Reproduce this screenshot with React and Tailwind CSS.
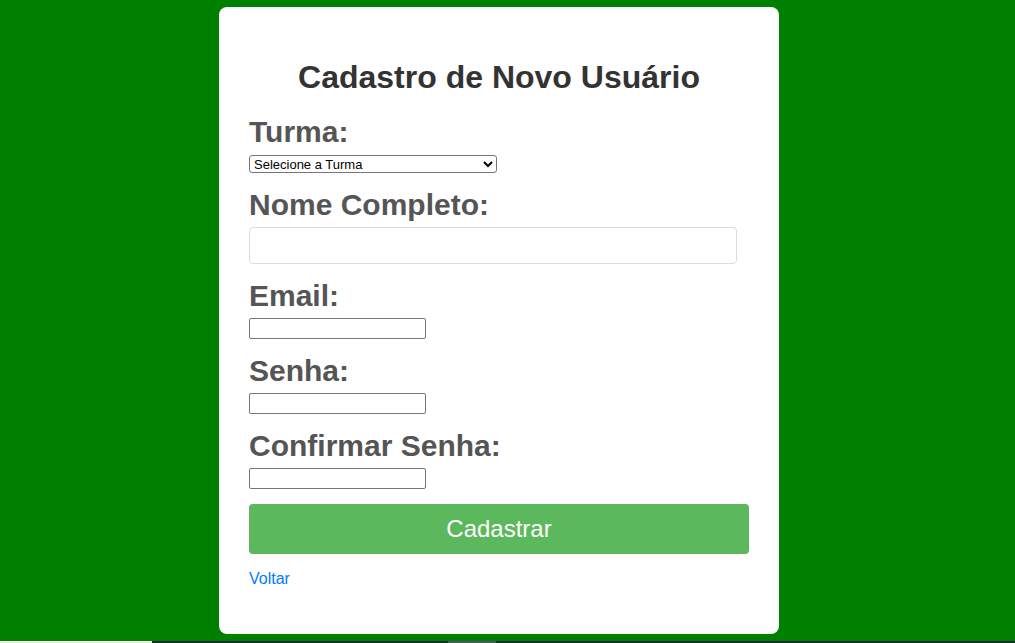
export default function App() {
  return (
    <div className="flex h-[643px] flex-col overflow-hidden bg-[#008000] font-['Liberation_Sans',Arial,sans-serif]">
      <div className="flex flex-1 justify-center pt-[7px] pr-[17px]">
        <form
          className="h-fit w-[560px] rounded-[8px] bg-white p-[30px]"
          onSubmit={(e) => e.preventDefault()}
        >
          <h1 className="mt-[21px] mb-[17px] text-center text-[32px] leading-[39px] font-bold text-[#333]">
            Cadastro de Novo Usuário
          </h1>

          {/* Turma */}
          <label className="mb-[5px] block text-[30px] leading-[36px] font-bold text-[#555]">
            Turma:
          </label>
          <select className="mb-[14px] block h-[18px] w-[248px] rounded-[3px] border border-[#767676] bg-white text-[13px] leading-[16px] text-black">
            <option>Selecione a Turma</option>
          </select>

          {/* Nome */}
          <label className="mb-[4px] block text-[30px] leading-[36px] font-bold text-[#555]">
            Nome Completo:
          </label>
          <input
            type="text"
            className="mb-[14px] block h-[37px] w-[488px] rounded-[4px] border border-[#ddd] bg-white px-[10px] text-[16px]"
          />

          {/* Email */}
          <label className="mb-[4px] block text-[30px] leading-[36px] font-bold text-[#555]">
            Email:
          </label>
          <input
            type="email"
            className="mb-[14px] block h-[21px] w-[177px] rounded-[2px] border border-[#767676] bg-white px-[2px] text-[13px]"
          />

          {/* Senha */}
          <label className="mb-[4px] block text-[30px] leading-[36px] font-bold text-[#555]">
            Senha:
          </label>
          <input
            type="password"
            className="mb-[14px] block h-[21px] w-[177px] rounded-[2px] border border-[#767676] bg-white px-[2px] text-[13px]"
          />

          {/* Confirmar */}
          <label className="mb-[4px] block text-[30px] leading-[36px] font-bold text-[#555]">
            Confirmar Senha:
          </label>
          <input
            type="password"
            className="mb-[15px] block h-[21px] w-[177px] rounded-[2px] border border-[#767676] bg-white px-[2px] text-[13px]"
          />

          <button
            type="submit"
            className="block h-[50px] w-full rounded-[4px] bg-[#5cb85c] text-[24px] text-white"
          >
            Cadastrar
          </button>

          <p className="mt-[16px] mb-[16px] text-[16px] leading-[18px]">
            <a href="#" className="text-[#007bff]">
              Voltar
            </a>
          </p>
        </form>
      </div>

      {/* bottom strip */}
      <div className="flex h-[2px] shrink-0">
        <div className="w-[152px] bg-[#ececec]" />
        <div className="w-[296px] bg-[#1f2b33]" />
        <div className="w-[48px] bg-[#4b5560]" />
        <div className="flex-1 bg-[#1f2b33]" />
      </div>
    </div>
  );
}
